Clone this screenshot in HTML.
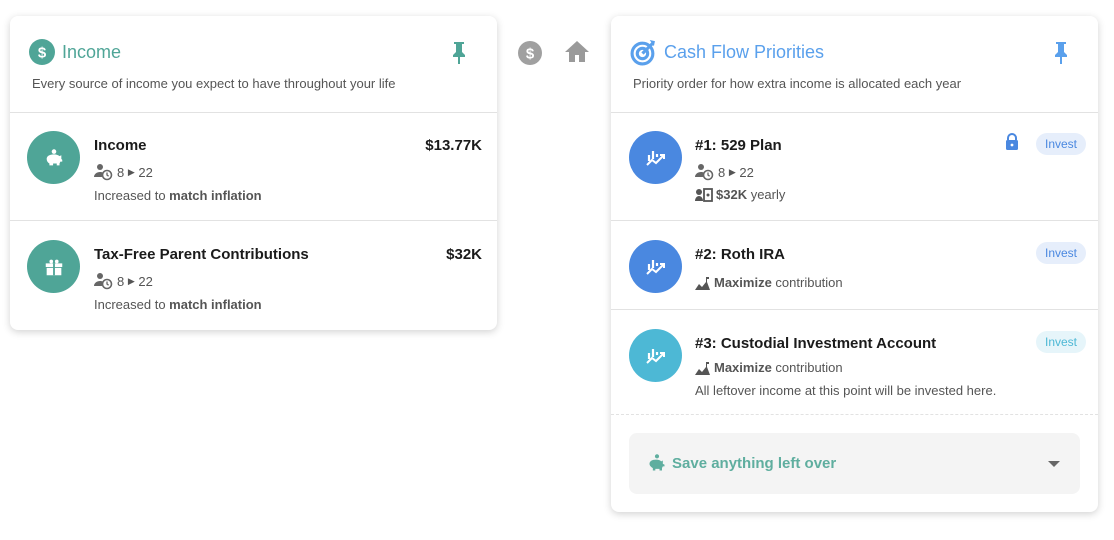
<!DOCTYPE html><html><head><style>
body{margin:0;width:1114px;height:540px;background:#fff;font-family:"Liberation Sans",sans-serif;position:relative;overflow:hidden}
.card{position:absolute;background:#fff;border-radius:8px;box-shadow:0 2px 8px rgba(0,0,0,.18)}
.a{position:absolute}
.hdr{position:absolute;left:0;right:0;top:0;height:96px;border-bottom:1px solid #e2e2e2}
.row{position:absolute;left:0;right:0;border-bottom:1px solid #e2e2e2}
.av{position:absolute;width:53px;height:53px;border-radius:50%;display:flex;align-items:center;justify-content:center}
.t{position:absolute;font-size:15px;font-weight:bold;color:#1b1b1b}
.s{position:absolute;font-size:13px;color:#555;display:flex;align-items:center;white-space:pre}
.s svg{margin-right:3px}
.s b{color:#555}
.badge{position:absolute;font-size:12px;padding:4px 9px;border-radius:12px}
</style></head><body>
<svg width="0" height="0" style="position:absolute"><defs>
<symbol id="pc" viewBox="0 0 20 18"><circle cx="6" cy="4" r="3" fill="#666"/><path d="M0 14c0-3 3-5 6-5 1.5 0 2.5.3 3.5.8A5 5 0 008 14z" fill="#666"/><circle cx="13" cy="12" r="4.5" fill="none" stroke="#666" stroke-width="1.6"/><path d="M13 9.5V12l1.6 1.2" stroke="#666" stroke-width="1.3" fill="none"/></symbol>
<symbol id="ch" viewBox="0 0 24 24"><path d="M5 15V9M9 13V5M13 11V8" stroke="#fff" stroke-width="2.2"/><path d="M3 19l5-5 4 3 7-7" stroke="#fff" stroke-width="2" fill="none"/><path d="M16 9h4v4" stroke="#fff" stroke-width="2" fill="none"/></symbol>
<symbol id="mx" viewBox="0 0 16 14"><path d="M0 14l4-6 3 3 4-5V1h3v2h-2v3l3 8z" fill="#555"/></symbol>
</defs></svg>
<div class="card" style="left:10px;top:16px;width:487px;height:314px">
 <div class="hdr">
  <svg class="a" style="left:19px;top:23px" width="26" height="26" viewBox="0 0 26 26"><circle cx="13" cy="13" r="13" fill="#4fa597"/><text x="13" y="18.5" text-anchor="middle" font-size="15" font-weight="bold" fill="#fff" font-family="Liberation Sans">$</text></svg>
  <div class="a" style="left:52px;top:26px;font-size:18px;color:#4fa597">Income</div>
  <svg class="a" style="left:441px;top:25px" width="16" height="24" viewBox="0 0 16 24"><path d="M3 1h10v2h-2v8l3 3v2H9v7H7v-7H2v-2l3-3V3H3z" fill="#4fa597"/></svg>
  <div class="s" style="left:22px;top:60px">Every source of income you expect to have throughout your life</div>
 </div>
 <div class="row" style="top:96px;height:108px">
  <div class="av" style="left:17px;top:19px;background:#4fa597"><svg width="22" height="22" viewBox="0 0 24 24"><circle cx="12" cy="5" r="2.5" fill="#fff"/><path d="M4 13c0-3 3-5 8-5 3 0 5 1 6 2l2-1v4l1 1v2h-2l-1 2v2h-3v-2h-4v2H7v-2c-2-1-3-3-3-5z" fill="#fff"/></svg></div>
  <div class="t" style="left:84px;top:25px">Income</div>
  <div class="t" style="right:15px;top:25px">$13.77K</div>
  <div class="s" style="left:84px;top:51px"><svg width="20" height="18"><use href="#pc"/></svg>8 <span style="font-size:9px">▶</span> 22</div>
  <div class="s" style="left:84px;top:76px">Increased to <b>match inflation</b></div>
 </div>
 <div class="row" style="top:205px;height:109px;border:none">
  <div class="av" style="left:17px;top:19px;background:#4fa597"><svg width="22" height="22" viewBox="0 0 24 24"><path d="M3 8h18v4H3zM4 13h16v8H4z" fill="#fff"/><path d="M12 8v13" stroke="#4fa597" stroke-width="2"/><circle cx="9" cy="6" r="2" fill="#fff"/><circle cx="15" cy="6" r="2" fill="#fff"/></svg></div>
  <div class="t" style="left:84px;top:25px">Tax-Free Parent Contributions</div>
  <div class="t" style="right:15px;top:25px">$32K</div>
  <div class="s" style="left:84px;top:51px"><svg width="20" height="18"><use href="#pc"/></svg>8 <span style="font-size:9px">▶</span> 22</div>
  <div class="s" style="left:84px;top:76px">Increased to <b>match inflation</b></div>
 </div>
</div>
<svg class="a" style="left:517px;top:40px" width="26" height="26" viewBox="0 0 26 26"><circle cx="13" cy="13" r="12" fill="#a0a0a0"/><text x="13" y="18.5" text-anchor="middle" font-size="15" font-weight="bold" fill="#fff" font-family="Liberation Sans">$</text></svg>
<svg class="a" style="left:564px;top:40px" width="26" height="24" viewBox="0 0 26 24"><path d="M13 1L1 12h4v10h6v-7h4v7h6V12h4z" fill="#9a9a9a"/></svg>
<div class="card" style="left:611px;top:16px;width:487px;height:496px">
 <div class="hdr">
  <svg class="a" style="left:19px;top:23px" width="27" height="27" viewBox="0 0 26 26"><circle cx="12" cy="14" r="10" fill="none" stroke="#5aa0ec" stroke-width="3"/><circle cx="12" cy="14" r="5" fill="none" stroke="#5aa0ec" stroke-width="3"/><path d="M12 14L22 4" stroke="#5aa0ec" stroke-width="3"/><path d="M19 1l5 1-1 5z" fill="#5aa0ec"/></svg>
  <div class="a" style="left:53px;top:26px;font-size:18px;color:#5aa0ec">Cash Flow Priorities</div>
  <svg class="a" style="left:442px;top:25px" width="16" height="24" viewBox="0 0 16 24"><path d="M3 1h10v2h-2v8l3 3v2H9v7H7v-7H2v-2l3-3V3H3z" fill="#5aa0ec"/></svg>
  <div class="s" style="left:22px;top:60px">Priority order for how extra income is allocated each year</div>
 </div>
 <div class="row" style="top:96px;height:108px">
  <div class="av" style="left:18px;top:19px;background:#4a88e0"><svg width="24" height="24"><use href="#ch"/></svg></div>
  <div class="t" style="left:84px;top:25px">#1: 529 Plan</div>
  <svg class="a" style="left:394px;top:21px" width="14" height="17" viewBox="0 0 14 17"><path d="M3 7V5a4 4 0 018 0v2" stroke="#4a88e0" stroke-width="2" fill="none"/><rect x="1" y="7" width="12" height="10" rx="1.5" fill="#4a88e0"/><circle cx="7" cy="12" r="1.4" fill="#fff"/></svg>
  <div class="badge" style="right:12px;top:21px;background:#e6eefb;color:#4a88e0">Invest</div>
  <div class="s" style="left:84px;top:51px"><svg width="20" height="18"><use href="#pc"/></svg>8 <span style="font-size:9px">▶</span> 22</div>
  <div class="s" style="left:84px;top:75px"><svg width="18" height="14" viewBox="0 0 18 14"><circle cx="4" cy="4" r="3" fill="#555"/><path d="M0 13c0-3 2-5 4-5s4 2 4 5z" fill="#555"/><rect x="9" y="1" width="8" height="12" fill="none" stroke="#555" stroke-width="1.8"/><circle cx="13" cy="7" r="1.5" fill="#555"/></svg><b>$32K</b> yearly</div>
 </div>
 <div class="row" style="top:205px;height:88px">
  <div class="av" style="left:18px;top:19px;background:#4a88e0"><svg width="24" height="24"><use href="#ch"/></svg></div>
  <div class="t" style="left:84px;top:25px">#2: Roth IRA</div>
  <div class="badge" style="right:12px;top:21px;background:#e6eefb;color:#4a88e0">Invest</div>
  <div class="s" style="left:84px;top:54px"><svg width="16" height="14"><use href="#mx"/></svg><b>Maximize</b> contribution</div>
 </div>
 <div class="row" style="top:294px;height:104px;border-bottom:1px dashed #e2e2e2">
  <div class="av" style="left:18px;top:19px;background:#4db8d5"><svg width="24" height="24"><use href="#ch"/></svg></div>
  <div class="t" style="left:84px;top:25px">#3: Custodial Investment Account</div>
  <div class="badge" style="right:12px;top:21px;background:#e6f5fa;color:#4db8d5">Invest</div>
  <div class="s" style="left:84px;top:50px"><svg width="16" height="14"><use href="#mx"/></svg><b>Maximize</b> contribution</div>
  <div class="s" style="left:84px;top:73px">All leftover income at this point will be invested here.</div>
 </div>
 <div class="a" style="left:18px;top:417px;width:451px;height:61px;background:#f4f4f4;border-radius:8px">
  <svg class="a" style="left:18px;top:20px" width="20" height="20" viewBox="0 0 24 24"><circle cx="12" cy="4" r="2.5" fill="#5fae9f"/><path d="M3 13c0-3 3-5 8-5 3 0 5 1 6 2l2-1v4l2 1v2h-2l-1 2v3h-3v-2h-5v2H7v-3c-2-1-4-3-4-5z" fill="#5fae9f"/></svg>
  <div class="a" style="left:43px;top:22px;font-size:15px;font-weight:bold;color:#5fae9f">Save anything left over</div>
  <div class="a" style="left:419px;top:28px;width:0;height:0;border-left:6px solid transparent;border-right:6px solid transparent;border-top:6px solid #666"></div>
 </div>
</div>
</body></html>
